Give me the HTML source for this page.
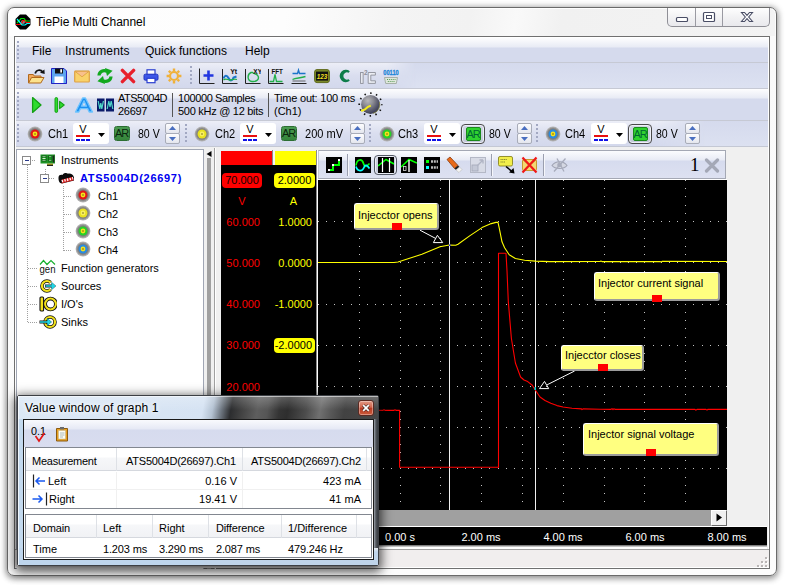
<!DOCTYPE html>
<html>
<head>
<meta charset="utf-8">
<title>TiePie Multi Channel</title>
<style>
html,body{margin:0;padding:0;}
body{width:786px;height:585px;overflow:hidden;background:#fff;position:relative;
 font-family:"Liberation Sans",sans-serif;font-size:11px;color:#000;}
.abs,.abs *{position:absolute;}
.abs{left:0;top:0;}
div,span,svg{box-sizing:border-box;}
.t{white-space:nowrap;line-height:14px;}
/* main window frame */
#win{left:7px;top:7px;width:770px;height:569px;border:1px solid #6a6a6a;border-radius:7px;
 background:linear-gradient(#fefefe,#fafafa 30px,#fcfcfc);
 box-shadow:0 1px 6px 1px rgba(0,0,0,.38), 0 3px 7px rgba(0,0,0,.14);}
#client{left:14px;top:36px;width:756px;height:533px;border:1px solid #707070;background:#f0f0f0;box-shadow:inset 0 0 0 1px #fff;}
.bar1{left:16px;width:752px;background:linear-gradient(#d5daed,#dce1f1);}
.bar2{left:16px;width:752px;background:linear-gradient(#fdfdfe 0,#e8ebf5 9px,#d5daed 10px,#d5daed 100%);}
.tb{background:linear-gradient(#eceef7 0,#dadeef 50%,#d3d8ec 100%);}
.sep{left:16px;width:752px;height:1px;background:#c6c9d4;}
.grip{width:3px;background:repeating-linear-gradient(180deg,#a2a8c2 0,#a2a8c2 2px,transparent 2px,transparent 4px);border-right:1px solid transparent;background-clip:padding-box;}
.m{font-size:12px;line-height:15px;}
.ax{font-size:11px;line-height:15px;text-align:center;}
.tx{color:#fff;width:40px;text-align:center;}
.sx{transform-origin:0 0;}
</style>
</head>
<body>
<div class="abs">
<div id="win"></div>
<div style="left:9px;top:9px;width:766px;height:27px;border-radius:5px 5px 0 0;background:linear-gradient(100deg,#fefefe 0,#fdfdfd 36%,#f4f4f4 50%,#f2f2f2 60%,#f9f9f9 66%,#f1f1f1 72%,#f3f3f3 100%);"></div>
<div id="client"></div>

<!-- title -->
<div class="t" style="left:36px;top:15px;font-size:12px;line-height:15px;letter-spacing:-0.05px">TiePie Multi Channel</div>

<!-- app icon -->
<svg style="left:15px;top:14px" width="16" height="16" viewBox="0 0 16 16"><polygon points="5,0.5 11,0.5 15.5,5 15.5,11 11,15.5 5,15.5 0.5,11 0.5,5" fill="#000"/><circle cx="8" cy="8" r="2" fill="#888"/><path d="M1,10.5H6L8,6.5H10L11,8.5H15" stroke="#f00" fill="none" stroke-width="1.2"/><path d="M2,9L6,4.5H9L11,7H15" stroke="#0d0" fill="none" stroke-width="1.2"/><path d="M2,5L7,11H10L12,9.5H15" stroke="#0ff" fill="none" stroke-width="1.2"/></svg>
<!-- caption buttons -->
<div style="left:667px;top:8px;width:103px;height:19px;border:1px solid #8f8f96;border-top:none;border-radius:0 0 5px 5px;background:linear-gradient(#fefefe,#f1f1f3 55%,#e9e9ed);"></div>
<div style="left:695px;top:8px;width:1px;height:18px;background:#9a9aa2"></div>
<div style="left:722px;top:8px;width:1px;height:18px;background:#9a9aa2"></div>
<svg style="left:667px;top:7px" width="103" height="20" viewBox="0 0 103 20">
<rect x="9.5" y="10.5" width="11" height="4" rx="1" fill="#fff" stroke="#4a4e66" stroke-width="1.2"/>
<rect x="36.5" y="5.5" width="11" height="9" rx="1" fill="#fff" stroke="#4a4e66" stroke-width="1.2"/>
<rect x="39.5" y="8.5" width="5" height="3" fill="#fff" stroke="#4a4e66" stroke-width="1"/>
<path d="M74.5,5.5h3l2.5,2.8l2.5,-2.8h3l-3.8,4.5l3.8,4.5h-3l-2.5,-2.8l-2.5,2.8h-3l3.8,-4.5z" fill="#fff" stroke="#4a4e66" stroke-width="1.1"/>
</svg>
<!-- bars -->
<div style="left:16px;top:38px;width:753px;height:109px;background:#fff"></div>
<div class="bar2" style="top:38px;height:24px;"></div>
<div class="sep" style="top:62px"></div>
<div class="bar1" style="top:63px;height:25px;"></div>
<div class="tb" style="left:16px;top:63px;width:400px;height:25px;-webkit-mask-image:linear-gradient(90deg,#000 0,#000 370px,transparent 400px);mask-image:linear-gradient(90deg,#000 0,#000 370px,transparent 400px);"></div>
<div class="sep" style="top:88px"></div>
<div class="bar2" style="top:89px;height:31px;"></div>
<div class="sep" style="top:120px"></div>
<div class="bar1" style="top:121px;height:25px;"></div>
<div class="tb" style="left:16px;top:121px;width:700px;height:25px;-webkit-mask-image:linear-gradient(90deg,#000 0,#000 640px,transparent 690px);mask-image:linear-gradient(90deg,#000 0,#000 640px,transparent 690px);"></div>
<div class="sep" style="top:146px;background:#c4c8d4"></div>

<!-- menu -->
<div class="grip" style="left:17px;top:41px;height:19px"></div>
<div class="t m" style="left:32px;top:44px;">File</div>
<div class="t m" style="left:65px;top:44px;letter-spacing:0.19px;">Instruments</div>
<div class="t m" style="left:145px;top:44px;">Quick functions</div>
<div class="t m" style="left:245px;top:44px;">Help</div>

<!-- toolbar 1 -->
<div class="grip" style="left:17px;top:66px;height:20px"></div>
<div class="grip" style="left:190px;top:66px;height:20px"></div>
<!-- open -->
<svg style="left:28px;top:68px" width="17" height="16" viewBox="0 0 17 16"><path d="M0.500,15V6.500h4.800l1,1.500h6.700v2.500" fill="#f2a85c" stroke="#b0681c"/><path d="M0.500,15L3.600,9.500h12.400L12.800,15z" fill="#fce28c" stroke="#b0681c"/><path d="M7.200,5.500C8,1.800 12.500,1 14.800,4" fill="none" stroke="#111" stroke-width="1.700"/><path d="M12,4.800l4.700,1.200l-0.300,-4.600z" fill="#111"/></svg>
<!-- save -->
<svg style="left:51px;top:68px" width="16" height="16" viewBox="0 0 16 16"><path d="M0.500,0.500h12.500l2.500,2.500v12.500H0.500z" fill="#5ea6f0" stroke="#2222c4" stroke-width="1"/><rect x="4" y="0.500" width="8" height="5" fill="#111"/><rect x="9.300" y="1.200" width="1.700" height="3.400" fill="#fff"/><rect x="3.500" y="8.500" width="9" height="7" fill="#fff"/><path d="M0.500,15.500H15.500" stroke="#2222c4"/></svg>
<!-- mail -->
<svg style="left:74px;top:68px" width="16" height="16" viewBox="0 0 16 16"><rect x="0.700" y="3" width="14.600" height="11" rx="0.800" fill="#f9d26a" stroke="#dea044" stroke-width="1.200"/><path d="M1,3.300L8,8.800L15,3.300z" fill="#f9c08c" stroke="#dea044" stroke-width="0.900"/></svg>
<!-- refresh -->
<svg style="left:97px;top:68px" width="16" height="16" viewBox="0 0 16 16"><path d="M2,7.500C2.200,3.400 6.500,1.600 10,3.400" fill="none" stroke="#12a81e" stroke-width="3.200"/><path d="M8,0L15.600,2.800L10,8z" fill="#12a81e"/><path d="M14,8.500C13.800,12.600 9.500,14.400 6,12.600" fill="none" stroke="#12a81e" stroke-width="3.200"/><path d="M8,16L0.400,13.200L6,8z" fill="#12a81e"/></svg>
<!-- delete X -->
<svg style="left:120px;top:68px" width="16" height="16" viewBox="0 0 16 16"><path d="M2.4,2.4L13.6,13.6M13.6,2.4L2.4,13.6" stroke="#e8202c" stroke-width="3.4" stroke-linecap="round"/></svg>
<!-- print -->
<svg style="left:143px;top:68px" width="16" height="16" viewBox="0 0 16 16"><rect x="4" y="1.8" width="8" height="5" fill="#fff" stroke="#2a3fd0" stroke-width="1.2"/><rect x="1" y="6.2" width="14" height="6" rx="1.3" fill="#3d57e8" stroke="#2436c0"/><rect x="4" y="10.3" width="8" height="4.4" fill="#fff" stroke="#2a3fd0" stroke-width="1.2"/></svg>
<!-- gear -->
<svg style="left:166px;top:68px" width="16" height="16" viewBox="0 0 16 16"><g fill="none" stroke="#f0b13a"><circle cx="8" cy="8" r="4" stroke-width="2.2"/><path d="M8,0.6V3M8,13V15.4M0.6,8H3M13,8H15.4M2.8,2.8L4.5,4.5M11.5,11.5L13.2,13.2M13.2,2.8L11.5,4.5M4.5,11.5L2.8,13.2" stroke-width="2.4"/></g></svg>
<!-- add axes -->
<svg style="left:199px;top:68px" width="16" height="16" viewBox="0 0 16 16"><path d="M0.5,0.5V15.5H15.5" fill="none" stroke="#222"/><path d="M9.5,2.5V12.5M4.5,7.5H14.5" stroke="#2236e0" stroke-width="2.6"/></svg>
<!-- Yt -->
<svg style="left:222px;top:68px" width="16" height="16" viewBox="0 0 16 16"><path d="M0.5,1V15.5H15.5" fill="none" stroke="#222"/><path d="M1.5,10.5C3,6.5 5,7 6.5,10S10,13.5 11.5,9.5L14.5,8.5" fill="none" stroke="#1b74c9" stroke-width="2"/><path d="M1.5,12C4,9.5 6,12.5 8.5,12S12,10.5 15,11.5" fill="none" stroke="#22b04a" stroke-width="1.3"/><text x="8.2" y="6" font-family="Liberation Sans,sans-serif" font-size="7" font-weight="bold" fill="#111">Yt</text></svg>
<!-- XY -->
<svg style="left:245px;top:68px" width="16" height="16" viewBox="0 0 16 16"><path d="M0.5,1V15.5H15.5" fill="none" stroke="#222"/><path d="M6,4.5C2,6.5 2,13 7,13.5S14.5,11 13,8S9.5,6.5 7.5,4.5z" fill="none" stroke="#22b04a" stroke-width="1.4"/><text x="8.3" y="5.8" font-family="Liberation Sans,sans-serif" font-size="6.5" font-weight="bold" fill="#111">XY</text></svg>
<!-- FFT -->
<svg style="left:268px;top:68px" width="16" height="16" viewBox="0 0 16 16"><path d="M0.5,1V15.5H15.5" fill="none" stroke="#222"/><path d="M1.5,13.5H5.5L7,6.5L8.5,13.5H14.5" fill="none" stroke="#22b04a" stroke-width="1.3"/><text x="3.4" y="5.6" font-family="Liberation Sans,sans-serif" font-size="6.3" font-weight="bold" fill="#111">FFT</text></svg>
<!-- lines -->
<svg style="left:291px;top:68px" width="16" height="16" viewBox="0 0 16 16"><path d="M0.5,15.5H15.5" stroke="#222"/><path d="M1.5,5.5H6.5L7.5,2L8.5,5.5H14.5" fill="none" stroke="#1b74c9" stroke-width="1.3"/><path d="M1.5,11.5C5,9.5 9,10.5 14.5,8.5" fill="none" stroke="#22b04a" stroke-width="1.4"/><path d="M1.5,13H14.5" stroke="#444" stroke-width="0.8"/></svg>
<!-- 123 -->
<svg style="left:314px;top:68px" width="16" height="16" viewBox="0 0 16 16"><rect x="0.6" y="1.6" width="14.8" height="13" rx="2.4" fill="#7c8a2a" stroke="#5f6a1c"/><rect x="2" y="3.6" width="12" height="9" fill="#111"/><text x="8" y="11.2" text-anchor="middle" font-family="Liberation Sans,sans-serif" font-size="8" font-style="italic" font-weight="bold" fill="#f5e020" textLength="10.5" lengthAdjust="spacingAndGlyphs">123</text></svg>
<!-- C -->
<svg style="left:337px;top:68px" width="16" height="16" viewBox="0 0 16 16"><path d="M12.8,3.2A6.2,6.2 0 1 0 12.8,12.8L11.6,11.2A3.6,3.6 0 1 1 11.6,4.8z" fill="#0e7d4a"/></svg>
<!-- I2C -->
<svg style="left:360px;top:68px" width="16" height="16" viewBox="0 0 16 16"><g fill="#eceef4" stroke="#8c8e98" stroke-width="0.900"><rect x="0.600" y="4.500" width="2.500" height="10.900"/><path d="M8.200,4.500h7.200v2.600h-4.600v5.700h4.600v2.600h-7.200z"/></g><text x="4" y="6.500" font-family="Liberation Sans,sans-serif" font-size="6.500" font-weight="bold" fill="#8c8e98">2</text></svg>
<!-- serial -->
<svg style="left:383px;top:68px" width="16" height="16" viewBox="0 0 16 16"><text x="8" y="6.800" text-anchor="middle" font-family="Liberation Sans,sans-serif" font-size="7.500" font-weight="bold" fill="#1f86d8" stroke="#1f86d8" stroke-width="0.300" textLength="15.500" lengthAdjust="spacingAndGlyphs">00110</text><path d="M1.500,9.500H14.500L13.300,15.500H2.700z" fill="#dfe8dc" stroke="#a0aaa0" stroke-width="0.900"/><path d="M4,11.500H12.500M4.800,13.500H11.600" stroke="#5a9a5a" stroke-width="1" stroke-dasharray="1 0.900"/></svg>

<!-- toolbar 2 -->
<div class="grip" style="left:17px;top:92px;height:26px"></div>
<svg style="left:28px;top:96px" width="16" height="18" viewBox="0 0 16 18"><path d="M4.6,1.6L13,9L4.6,16.4z" fill="#2fdc2f" stroke="#14a014" stroke-width="1.3" stroke-linejoin="round"/></svg>
<svg style="left:51px;top:96px" width="16" height="18" viewBox="0 0 16 18"><rect x="4" y="1.6" width="2.6" height="14.8" rx="1.2" fill="#2fdc2f" stroke="#14a014" stroke-width="1"/><path d="M8.6,5.4L13.2,9L8.6,12.6z" fill="#2fdc2f" stroke="#14a014" stroke-width="1.1" stroke-linejoin="round"/></svg>
<svg style="left:74px;top:96px" width="20" height="18" viewBox="0 0 20 18"><path d="M1.5,16L8.6,2H11.4L18.500,16H15.200L13.600,12.600H6.400L4.800,16zM7.500,10.200H12.500L10,4.800z" fill="#1e90f0" stroke="#6cc4ff" stroke-width="1.300" stroke-linejoin="round"/></svg>
<svg style="left:97px;top:98px" width="17" height="14" viewBox="0 0 17 14"><rect x="0" y="0.5" width="7.5" height="13" fill="#0a1a6a"/><rect x="9" y="0.5" width="8" height="13" fill="#0a1a6a"/><path d="M1.2,3L2.8,11L3.8,5L4.8,11L6.4,3" fill="none" stroke="#4fd8c8" stroke-width="1.2"/><path d="M10.2,11L11.8,3L13,9L14.2,3L15.8,11" fill="none" stroke="#4fd8c8" stroke-width="1.2"/></svg>
<div class="t" style="left:118px;top:92px;line-height:13px;letter-spacing:-0.5px">ATS5004D</div><div class="t" style="left:118px;top:105px;line-height:13px;letter-spacing:-0.3px">26697</div>
<div style="left:172px;top:93px;width:1px;height:24px;background:#555"></div>
<div class="t" style="left:178px;top:92px;line-height:13px;letter-spacing:-0.38px">100000 Samples</div><div class="t" style="left:178px;top:105px;line-height:13px;letter-spacing:-0.28px">500 kHz @ 12 bits</div>
<div style="left:268px;top:93px;width:1px;height:24px;background:#555"></div>
<div class="t" style="left:274px;top:92px;line-height:13px;letter-spacing:-0.22px">Time out: 100 ms</div><div class="t" style="left:274px;top:105px;line-height:13px;">(Ch1)</div>
<!-- knob -->
<svg style="left:357px;top:91px" width="28" height="28" viewBox="0 0 28 28"><defs><radialGradient id="kg" cx="0.36" cy="0.30" r="0.8"><stop offset="0" stop-color="#b8b8bc"/><stop offset="0.35" stop-color="#8c8c94"/><stop offset="0.7" stop-color="#55566a"/><stop offset="1" stop-color="#2c2e48"/></radialGradient></defs><circle cx="13.5" cy="13.500" r="11.300" fill="none" stroke="#111" stroke-width="1.700" stroke-dasharray="1.500 4.420" stroke-dashoffset="0.700"/><circle cx="13.500" cy="13.500" r="9.400" fill="url(#kg)"/><path d="M16,22.500A9.400,9.400 0 0 0 22.500,11" fill="none" stroke="#8a8a3a" stroke-width="1" opacity="0.700"/><path d="M4.200,20L8,18.300L11,15.800L13.800,14.600" fill="none" stroke="#f5ec1a" stroke-width="2"/></svg>

<!-- toolbar 3: channels -->
<div class="grip" style="left:17px;top:124px;height:20px"></div>
<svg style="left:27px;top:126px" width="16" height="16" viewBox="0 0 16 16"><circle cx="8" cy="8" r="7.4" fill="#b2b2b2"/><circle cx="8" cy="8" r="6.5" fill="#929292"/><circle cx="8" cy="8" r="5.4" fill="#7c7c7c"/><circle cx="8" cy="8" r="4.5" fill="#e01818"/><circle cx="8" cy="8" r="2.4" fill="#f5e21a"/><circle cx="8" cy="8" r="0.7" fill="#5a4a10"/></svg>
<div class="t m sx" style="left:48px;top:127px;transform:scaleX(0.92);">Ch1</div>
<div style="left:73px;top:123px;width:36px;height:21px;background:#fff;border-radius:3px;"></div>
<div class="t" style="left:76px;top:122px;width:14px;text-align:center;font-size:11px;line-height:15px;">V</div>
<div style="left:76px;top:135px;width:14px;height:2px;background:#e81010"></div>
<div style="left:76px;top:139px;width:14px;height:2px;background:linear-gradient(90deg,#1010e8 0,#1010e8 4px,transparent 4px,transparent 5px,#1010e8 5px,#1010e8 9px,transparent 9px,transparent 10px,#1010e8 10px)"></div>
<svg style="left:98px;top:133px" width="7" height="4" viewBox="0 0 7 4"><path d="M0,0H7L3.5,4z" fill="#000"/></svg>
<div class="t" style="left:114px;top:126px;width:16px;height:15px;background:#3d8f43;border:1px solid #2c6e32;border-radius:2.5px;font-size:11px;line-height:13px;text-align:center;letter-spacing:-1.2px;text-indent:-1px;color:#0a260e;background:linear-gradient(#4a9a50,#35853b);">AR</div>
<div class="t m sx" style="left:138px;top:127px;transform:scaleX(0.88);">80 V</div>
<div style="left:165px;top:123px;width:15px;height:11px;border:1px solid #a8acb8;border-radius:2px;background:linear-gradient(#fdfdfe,#e4e6ee);"></div>
<div style="left:165px;top:133px;width:15px;height:11px;border:1px solid #a8acb8;border-radius:2px;background:linear-gradient(#fdfdfe,#e4e6ee);"></div>
<svg style="left:169px;top:126px" width="7" height="4" viewBox="0 0 7 4"><path d="M0,4H7L3.5,0z" fill="#4a6fc0"/></svg>
<svg style="left:169px;top:137px" width="7" height="4" viewBox="0 0 7 4"><path d="M0,0H7L3.5,4z" fill="#4a6fc0"/></svg>
<div class="grip" style="left:185px;top:124px;height:20px"></div>
<svg style="left:194px;top:126px" width="16" height="16" viewBox="0 0 16 16"><circle cx="8" cy="8" r="7.4" fill="#b2b2b2"/><circle cx="8" cy="8" r="6.5" fill="#929292"/><circle cx="8" cy="8" r="5.4" fill="#7c7c7c"/><circle cx="8" cy="8" r="4.5" fill="#e8e020"/><circle cx="8" cy="8" r="2.4" fill="#f8f060"/><circle cx="8" cy="8" r="0.7" fill="#5a4a10"/></svg>
<div class="t m sx" style="left:215px;top:127px;transform:scaleX(0.92);">Ch2</div>
<div style="left:240px;top:123px;width:36px;height:21px;background:#fff;border-radius:3px;"></div>
<div class="t" style="left:243px;top:122px;width:14px;text-align:center;font-size:11px;line-height:15px;">V</div>
<div style="left:243px;top:135px;width:14px;height:2px;background:#e81010"></div>
<div style="left:243px;top:139px;width:14px;height:2px;background:linear-gradient(90deg,#1010e8 0,#1010e8 4px,transparent 4px,transparent 5px,#1010e8 5px,#1010e8 9px,transparent 9px,transparent 10px,#1010e8 10px)"></div>
<svg style="left:265px;top:133px" width="7" height="4" viewBox="0 0 7 4"><path d="M0,0H7L3.5,4z" fill="#000"/></svg>
<div class="t" style="left:281px;top:126px;width:16px;height:15px;background:#3d8f43;border:1px solid #2c6e32;border-radius:2.5px;font-size:11px;line-height:13px;text-align:center;letter-spacing:-1.2px;text-indent:-1px;color:#0a260e;background:linear-gradient(#4a9a50,#35853b);">AR</div>
<div class="t m sx" style="left:305px;top:127px;transform:scaleX(0.92);">200 mV</div>
<div style="left:350px;top:123px;width:15px;height:11px;border:1px solid #a8acb8;border-radius:2px;background:linear-gradient(#fdfdfe,#e4e6ee);"></div>
<div style="left:350px;top:133px;width:15px;height:11px;border:1px solid #a8acb8;border-radius:2px;background:linear-gradient(#fdfdfe,#e4e6ee);"></div>
<svg style="left:354px;top:126px" width="7" height="4" viewBox="0 0 7 4"><path d="M0,4H7L3.5,0z" fill="#4a6fc0"/></svg>
<svg style="left:354px;top:137px" width="7" height="4" viewBox="0 0 7 4"><path d="M0,0H7L3.5,4z" fill="#4a6fc0"/></svg>
<div class="grip" style="left:369px;top:124px;height:20px"></div>
<svg style="left:379px;top:126px" width="16" height="16" viewBox="0 0 16 16"><circle cx="8" cy="8" r="7.4" fill="#b2b2b2"/><circle cx="8" cy="8" r="6.5" fill="#929292"/><circle cx="8" cy="8" r="5.4" fill="#7c7c7c"/><circle cx="8" cy="8" r="4.5" fill="#28d028"/><circle cx="8" cy="8" r="2.4" fill="#f5e21a"/><circle cx="8" cy="8" r="0.7" fill="#5a4a10"/></svg>
<div class="t m sx" style="left:398px;top:127px;transform:scaleX(0.92);">Ch3</div>
<div style="left:424px;top:123px;width:36px;height:21px;background:#fff;border-radius:3px;"></div>
<div class="t" style="left:427px;top:122px;width:14px;text-align:center;font-size:11px;line-height:15px;">V</div>
<div style="left:427px;top:135px;width:14px;height:2px;background:#e81010"></div>
<div style="left:427px;top:139px;width:14px;height:2px;background:linear-gradient(90deg,#1010e8 0,#1010e8 4px,transparent 4px,transparent 5px,#1010e8 5px,#1010e8 9px,transparent 9px,transparent 10px,#1010e8 10px)"></div>
<svg style="left:449px;top:133px" width="7" height="4" viewBox="0 0 7 4"><path d="M0,0H7L3.5,4z" fill="#000"/></svg>
<div style="left:461px;top:124px;width:24px;height:20px;border:1px solid #4a4a4a;border-radius:4px;background:linear-gradient(#d2d6e4,#c2c7d8);box-shadow:inset 0 0 0 1px #eef0f7;"></div>
<div class="t" style="left:466px;top:127px;width:15px;height:14px;background:#2fd22f;border:1px solid #1a8a1a;border-radius:2px;font-size:11px;line-height:12px;text-align:center;letter-spacing:-1.2px;text-indent:-1px;color:#063;">AR</div>
<div class="t m sx" style="left:489px;top:127px;transform:scaleX(0.88);">80 V</div>
<div style="left:517px;top:123px;width:15px;height:11px;border:1px solid #a8acb8;border-radius:2px;background:linear-gradient(#fdfdfe,#e4e6ee);"></div>
<div style="left:517px;top:133px;width:15px;height:11px;border:1px solid #a8acb8;border-radius:2px;background:linear-gradient(#fdfdfe,#e4e6ee);"></div>
<svg style="left:521px;top:126px" width="7" height="4" viewBox="0 0 7 4"><path d="M0,4H7L3.5,0z" fill="#4a6fc0"/></svg>
<svg style="left:521px;top:137px" width="7" height="4" viewBox="0 0 7 4"><path d="M0,0H7L3.5,4z" fill="#4a6fc0"/></svg>
<div class="grip" style="left:536px;top:124px;height:20px"></div>
<svg style="left:545px;top:126px" width="16" height="16" viewBox="0 0 16 16"><circle cx="8" cy="8" r="7.4" fill="#b2b2b2"/><circle cx="8" cy="8" r="6.5" fill="#929292"/><circle cx="8" cy="8" r="5.4" fill="#7c7c7c"/><circle cx="8" cy="8" r="4.5" fill="#2a8ce0"/><circle cx="8" cy="8" r="2.4" fill="#f5e21a"/><circle cx="8" cy="8" r="0.7" fill="#5a4a10"/></svg>
<div class="t m sx" style="left:565px;top:127px;transform:scaleX(0.92);">Ch4</div>
<div style="left:591px;top:123px;width:36px;height:21px;background:#fff;border-radius:3px;"></div>
<div class="t" style="left:594px;top:122px;width:14px;text-align:center;font-size:11px;line-height:15px;">V</div>
<div style="left:594px;top:135px;width:14px;height:2px;background:#e81010"></div>
<div style="left:594px;top:139px;width:14px;height:2px;background:linear-gradient(90deg,#1010e8 0,#1010e8 4px,transparent 4px,transparent 5px,#1010e8 5px,#1010e8 9px,transparent 9px,transparent 10px,#1010e8 10px)"></div>
<svg style="left:616px;top:133px" width="7" height="4" viewBox="0 0 7 4"><path d="M0,0H7L3.5,4z" fill="#000"/></svg>
<div style="left:628px;top:124px;width:24px;height:20px;border:1px solid #4a4a4a;border-radius:4px;background:linear-gradient(#d2d6e4,#c2c7d8);box-shadow:inset 0 0 0 1px #eef0f7;"></div>
<div class="t" style="left:633px;top:127px;width:15px;height:14px;background:#2fd22f;border:1px solid #1a8a1a;border-radius:2px;font-size:11px;line-height:12px;text-align:center;letter-spacing:-1.2px;text-indent:-1px;color:#063;">AR</div>
<div class="t m sx" style="left:656px;top:127px;transform:scaleX(0.88);">80 V</div>
<div style="left:685px;top:123px;width:15px;height:11px;border:1px solid #a8acb8;border-radius:2px;background:linear-gradient(#fdfdfe,#e4e6ee);"></div>
<div style="left:685px;top:133px;width:15px;height:11px;border:1px solid #a8acb8;border-radius:2px;background:linear-gradient(#fdfdfe,#e4e6ee);"></div>
<svg style="left:689px;top:126px" width="7" height="4" viewBox="0 0 7 4"><path d="M0,4H7L3.5,0z" fill="#4a6fc0"/></svg>
<svg style="left:689px;top:137px" width="7" height="4" viewBox="0 0 7 4"><path d="M0,0H7L3.5,4z" fill="#4a6fc0"/></svg>

<!-- tree panel -->
<div style="left:16px;top:149px;width:188px;height:420px;background:#fff;border:1px solid #a0a6b4;border-bottom:none;"></div>
<!-- tree dotted lines -->
<svg style="left:16px;top:149px" width="188" height="200" viewBox="0 0 188 200" shape-rendering="crispEdges">
<g stroke="#a0a0a0" stroke-width="1" stroke-dasharray="1 1" fill="none">
<path d="M11.500,16V173.500M16,11.500H20M11.500,119.500H21M11.500,137.500H21M11.500,155.500H21M11.500,173.500H21"/>
<path d="M29.500,20V25M33,29.500H38"/>
<path d="M47.500,37V101.500M47.500,47.500H56M47.500,65.500H56M47.500,83.500H56M47.500,101.500H56"/>
</g>
<g fill="#fff" stroke="#8a8a8a" stroke-width="1"><rect x="6.5" y="7.5" width="8" height="8"/><rect x="24.5" y="25.500" width="8" height="8"/></g>
<path d="M8.5,11.5H13M26.5,29.500H31" stroke="#2a3a8a" stroke-width="1"/>
</svg>
<!-- Instruments icon -->
<svg style="left:40px;top:153px" width="17" height="15" viewBox="0 0 17 15"><rect x="0.500" y="1.500" width="14.500" height="9" fill="#1f9426"/><path d="M2,3.500h4M2,5.500h4M2,7.500h4M8.500,3.500h3M8.500,7.500h3" stroke="#d4efcf" stroke-width="1"/><rect x="2" y="3" width="4" height="5" fill="none" stroke="#0c5a12" stroke-width="0.800"/><rect x="8.500" y="3" width="3.500" height="5" fill="none" stroke="#0c5a12" stroke-width="0.800"/><rect x="12.800" y="2.500" width="1.500" height="7" fill="#222"/><rect x="7" y="10.500" width="6" height="1.800" fill="#8a8a1a"/><rect x="7" y="12" width="6" height="1" fill="#222"/></svg>
<div class="t" style="left:61px;top:153px;">Instruments</div>
<!-- instrument icon -->
<svg style="left:58px;top:171px" width="17" height="14" viewBox="0 0 17 14"><path d="M0.500,6.500C0.500,4 3,3.500 4.500,4C5.500,2 8.500,1.500 10,2.800C12,2 15.500,3.500 16,6.500V9.500L4,12.500C1.500,12.500 0.300,9.500 0.500,6.500z" fill="#0c0c0c"/><path d="M3.800,10.300L15.200,7.300" stroke="#d22" stroke-width="3"/><path d="M3.800,10.300L15.200,7.300" stroke="#fff" stroke-width="2.600" stroke-dasharray="1.300 1.400"/><path d="M3.500,12L15.500,9" stroke="#d22" stroke-width="0.800"/></svg>
<div class="t" style="left:80px;top:171px;font-weight:bold;color:#0000f0;letter-spacing:0.7px;">ATS5004D(26697)</div>
<svg style="left:75.400px;top:187.3px" width="16" height="16" viewBox="0 0 16 16"><circle cx="8" cy="8" r="7.4" fill="#b2b2b2"/><circle cx="8" cy="8" r="6.5" fill="#929292"/><circle cx="8" cy="8" r="5.4" fill="#7c7c7c"/><circle cx="8" cy="8" r="4.5" fill="#e01818"/><circle cx="8" cy="8" r="2.4" fill="#f5e21a"/><circle cx="8" cy="8" r="0.7" fill="#5a4a10"/></svg>
<div class="t" style="left:98px;top:189px;">Ch1</div>
<svg style="left:75.400px;top:205.3px" width="16" height="16" viewBox="0 0 16 16"><circle cx="8" cy="8" r="7.4" fill="#b2b2b2"/><circle cx="8" cy="8" r="6.5" fill="#929292"/><circle cx="8" cy="8" r="5.4" fill="#7c7c7c"/><circle cx="8" cy="8" r="4.5" fill="#e8e020"/><circle cx="8" cy="8" r="2.4" fill="#f8f060"/><circle cx="8" cy="8" r="0.7" fill="#5a4a10"/></svg>
<div class="t" style="left:98px;top:207px;">Ch2</div>
<svg style="left:75.400px;top:223.3px" width="16" height="16" viewBox="0 0 16 16"><circle cx="8" cy="8" r="7.4" fill="#b2b2b2"/><circle cx="8" cy="8" r="6.5" fill="#929292"/><circle cx="8" cy="8" r="5.4" fill="#7c7c7c"/><circle cx="8" cy="8" r="4.5" fill="#28d028"/><circle cx="8" cy="8" r="2.4" fill="#f5e21a"/><circle cx="8" cy="8" r="0.7" fill="#5a4a10"/></svg>
<div class="t" style="left:98px;top:225px;">Ch3</div>
<svg style="left:75.400px;top:241.3px" width="16" height="16" viewBox="0 0 16 16"><circle cx="8" cy="8" r="7.4" fill="#b2b2b2"/><circle cx="8" cy="8" r="6.5" fill="#929292"/><circle cx="8" cy="8" r="5.4" fill="#7c7c7c"/><circle cx="8" cy="8" r="4.5" fill="#2a8ce0"/><circle cx="8" cy="8" r="2.4" fill="#f5e21a"/><circle cx="8" cy="8" r="0.7" fill="#5a4a10"/></svg>
<div class="t" style="left:98px;top:243px;">Ch4</div>

<!-- gen icon -->
<svg style="left:39px;top:259px" width="18" height="17" viewBox="0 0 18 17"><path d="M1,5.500L4.500,1.500L8,5.500L12,1.500L16,5.500" fill="none" stroke="#18b030" stroke-width="1.200"/><text x="0.500" y="13.500" font-family="Liberation Sans,sans-serif" font-size="11" fill="#111" textLength="16" lengthAdjust="spacingAndGlyphs">gen</text></svg>
<div class="t" style="left:61px;top:261px;">Function generators</div>
<!-- sources icon -->
<svg style="left:39px;top:278px" width="18" height="16" viewBox="0 0 18 16"><path d="M11.500,4.500A5,5 0 1 0 11.500,11.500" fill="none" stroke="#111" stroke-width="3.600"/><path d="M11.500,4.500A5,5 0 1 0 11.500,11.500" fill="none" stroke="#f2e21a" stroke-width="2.200"/><path d="M6,8H13.500" stroke="#111" stroke-width="3"/><path d="M12.500,4L17,8L12.500,12z" fill="#111"/><path d="M6.500,8H13.500M13.300,5.800L15.800,8L13.300,10.200z" stroke="#22d8e8" stroke-width="1.300" fill="#22d8e8"/></svg>
<div class="t" style="left:61px;top:279px;">Sources</div>
<!-- IO icon -->
<svg style="left:39px;top:296px" width="18" height="16" viewBox="0 0 18 16"><rect x="1" y="1" width="3.600" height="14" rx="1" fill="#f2e21a" stroke="#111" stroke-width="1.100"/><circle cx="11.500" cy="8" r="5.400" fill="none" stroke="#111" stroke-width="3.800"/><circle cx="11.500" cy="8" r="5.400" fill="none" stroke="#f2e21a" stroke-width="2"/></svg>
<div class="t" style="left:61px;top:297px;">I/O's</div>
<!-- sinks icon -->
<svg style="left:39px;top:314px" width="18" height="16" viewBox="0 0 18 16"><circle cx="11" cy="8" r="5" fill="none" stroke="#111" stroke-width="3.600"/><circle cx="11" cy="8" r="5" fill="none" stroke="#f2e21a" stroke-width="2.200"/><path d="M0.500,8H9" stroke="#111" stroke-width="3"/><path d="M8,4L12.800,8L8,12z" fill="#111"/><path d="M1,8H9M9,5.800L11.500,8L9,10.200z" stroke="#22d8e8" stroke-width="1.300" fill="#22d8e8"/></svg>
<div class="t" style="left:61px;top:315px;">Sinks</div>

<!-- splitter -->
<svg style="left:206px;top:151px" width="6" height="6" viewBox="0 0 6 6"><path d="M5.500,0V6L0.500,3z" fill="#000"/></svg>
<div style="left:207px;top:158px;width:4px;height:411px;background:#a0a0a0"></div>
<div style="left:214px;top:148px;width:1px;height:421px;background:#a0a0a0"></div>
<div style="left:215px;top:148px;width:1px;height:421px;background:#fff"></div>

<!-- scope: axis area -->
<div style="left:221px;top:151px;width:95px;height:394px;background:#000"></div>
<div style="left:221px;top:151px;width:51px;height:14px;background:#f00"></div>
<div style="left:272px;top:150px;width:3px;height:15px;background:linear-gradient(90deg,#8a8a8a 0,#8a8a8a 1px,#f4f4f4 1px)"></div>
<div style="left:275px;top:151px;width:41px;height:14px;background:#ff0"></div>
<div style="left:316px;top:150px;width:1px;height:395px;background:#8a8a8a"></div>
<div style="left:317px;top:150px;width:1px;height:395px;background:#fff"></div>
<div class="t ax" style="left:222px;top:173px;width:40px;height:15px;background:#f00;border-radius:4px;color:#100;">70.000</div>
<div class="t ax" style="left:274px;top:173px;width:41px;height:15px;background:#ff0;border-radius:4px;color:#000;">2.0000</div>
<div class="t ax" style="left:222px;top:194px;width:40px;color:#f00;">V</div>
<div class="t ax" style="left:273px;top:194px;width:41px;color:#ff0;">A</div>
<div class="t ax" style="left:222px;top:215px;width:40px;color:#f00;text-align:right;padding-right:2px">60.000</div>
<div class="t ax" style="left:222px;top:256px;width:40px;color:#f00;text-align:right;padding-right:2px">50.000</div>
<div class="t ax" style="left:222px;top:297px;width:40px;color:#f00;text-align:right;padding-right:2px">40.000</div>
<div class="t ax" style="left:222px;top:338px;width:40px;color:#f00;text-align:right;padding-right:2px">30.000</div>
<div class="t ax" style="left:222px;top:380px;width:40px;color:#f00;text-align:right;padding-right:2px">20.000</div>
<div class="t ax" style="left:222px;top:421px;width:40px;color:#f00;text-align:right;padding-right:2px">10.000</div>
<div class="t ax" style="left:222px;top:462px;width:40px;color:#f00;text-align:right;padding-right:2px">0.000</div>
<div class="t ax" style="left:222px;top:503px;width:40px;color:#f00;text-align:right;padding-right:2px">-10.000</div>
<div class="t ax" style="left:274px;top:215px;width:41px;color:#ff0;text-align:right;padding-right:3px">1.0000</div>
<div class="t ax" style="left:274px;top:256px;width:41px;color:#ff0;text-align:right;padding-right:3px">0.0000</div>
<div class="t ax" style="left:274px;top:297px;width:41px;color:#ff0;text-align:right;padding-right:3px">-1.0000</div>
<div class="t ax" style="left:274px;top:338px;width:41px;height:15px;background:#ff0;border-radius:4px;color:#000;text-align:right;padding-right:3px">-2.0000</div>

<!-- scope toolbar -->
<div style="left:318px;top:150px;width:408px;height:29px;border:1px solid #a4a8b4;border-left:1px solid #c4c8d2;background:linear-gradient(#fbfcfe 0,#e8ebf5 9px,#d6dbee 10px,#dde1f1 100%);"></div>
<div style="left:318px;top:179px;width:409px;height:1px;background:#fff"></div>
<!-- graph -->
<svg style="left:318px;top:180px" width="409" height="330" viewBox="0 0 409 330"><rect width="409" height="330" fill="#000"/>
<g shape-rendering="crispEdges"><path d="M0,41h1v1h-1zM0,82h1v1h-1zM0,124h1v1h-1zM0,165h1v1h-1zM0,206h1v1h-1zM0,247h1v1h-1zM0,288h1v1h-1zM8,41h1v1h-1zM8,82h1v1h-1zM8,124h1v1h-1zM8,165h1v1h-1zM8,206h1v1h-1zM8,247h1v1h-1zM8,288h1v1h-1zM16,41h1v1h-1zM16,82h1v1h-1zM16,124h1v1h-1zM16,165h1v1h-1zM16,206h1v1h-1zM16,247h1v1h-1zM16,288h1v1h-1zM24,41h1v1h-1zM24,82h1v1h-1zM24,124h1v1h-1zM24,165h1v1h-1zM24,206h1v1h-1zM24,247h1v1h-1zM24,288h1v1h-1zM33,41h1v1h-1zM33,82h1v1h-1zM33,124h1v1h-1zM33,165h1v1h-1zM33,206h1v1h-1zM33,247h1v1h-1zM33,288h1v1h-1zM41,0h1v1h-1zM41,8h1v1h-1zM41,16h1v1h-1zM41,25h1v1h-1zM41,33h1v1h-1zM41,41h1v1h-1zM41,49h1v1h-1zM41,58h1v1h-1zM41,66h1v1h-1zM41,74h1v1h-1zM41,82h1v1h-1zM41,91h1v1h-1zM41,99h1v1h-1zM41,107h1v1h-1zM41,115h1v1h-1zM41,124h1v1h-1zM41,132h1v1h-1zM41,140h1v1h-1zM41,148h1v1h-1zM41,157h1v1h-1zM41,165h1v1h-1zM41,173h1v1h-1zM41,181h1v1h-1zM41,190h1v1h-1zM41,198h1v1h-1zM41,206h1v1h-1zM41,214h1v1h-1zM41,222h1v1h-1zM41,231h1v1h-1zM41,239h1v1h-1zM41,247h1v1h-1zM41,255h1v1h-1zM41,264h1v1h-1zM41,272h1v1h-1zM41,280h1v1h-1zM41,288h1v1h-1zM41,297h1v1h-1zM41,305h1v1h-1zM41,313h1v1h-1zM41,321h1v1h-1zM49,41h1v1h-1zM49,82h1v1h-1zM49,124h1v1h-1zM49,165h1v1h-1zM49,206h1v1h-1zM49,247h1v1h-1zM49,288h1v1h-1zM57,41h1v1h-1zM57,82h1v1h-1zM57,124h1v1h-1zM57,165h1v1h-1zM57,206h1v1h-1zM57,247h1v1h-1zM57,288h1v1h-1zM65,41h1v1h-1zM65,82h1v1h-1zM65,124h1v1h-1zM65,165h1v1h-1zM65,206h1v1h-1zM65,247h1v1h-1zM65,288h1v1h-1zM73,41h1v1h-1zM73,82h1v1h-1zM73,124h1v1h-1zM73,165h1v1h-1zM73,206h1v1h-1zM73,247h1v1h-1zM73,288h1v1h-1zM82,0h1v1h-1zM82,8h1v1h-1zM82,16h1v1h-1zM82,25h1v1h-1zM82,33h1v1h-1zM82,41h1v1h-1zM82,49h1v1h-1zM82,58h1v1h-1zM82,66h1v1h-1zM82,74h1v1h-1zM82,82h1v1h-1zM82,91h1v1h-1zM82,99h1v1h-1zM82,107h1v1h-1zM82,115h1v1h-1zM82,124h1v1h-1zM82,132h1v1h-1zM82,140h1v1h-1zM82,148h1v1h-1zM82,157h1v1h-1zM82,165h1v1h-1zM82,173h1v1h-1zM82,181h1v1h-1zM82,190h1v1h-1zM82,198h1v1h-1zM82,206h1v1h-1zM82,214h1v1h-1zM82,222h1v1h-1zM82,231h1v1h-1zM82,239h1v1h-1zM82,247h1v1h-1zM82,255h1v1h-1zM82,264h1v1h-1zM82,272h1v1h-1zM82,280h1v1h-1zM82,288h1v1h-1zM82,297h1v1h-1zM82,305h1v1h-1zM82,313h1v1h-1zM82,321h1v1h-1zM90,41h1v1h-1zM90,82h1v1h-1zM90,124h1v1h-1zM90,165h1v1h-1zM90,206h1v1h-1zM90,247h1v1h-1zM90,288h1v1h-1zM98,41h1v1h-1zM98,82h1v1h-1zM98,124h1v1h-1zM98,165h1v1h-1zM98,206h1v1h-1zM98,247h1v1h-1zM98,288h1v1h-1zM106,41h1v1h-1zM106,82h1v1h-1zM106,124h1v1h-1zM106,165h1v1h-1zM106,206h1v1h-1zM106,247h1v1h-1zM106,288h1v1h-1zM114,41h1v1h-1zM114,82h1v1h-1zM114,124h1v1h-1zM114,165h1v1h-1zM114,206h1v1h-1zM114,247h1v1h-1zM114,288h1v1h-1zM122,0h1v1h-1zM122,8h1v1h-1zM122,16h1v1h-1zM122,25h1v1h-1zM122,33h1v1h-1zM122,41h1v1h-1zM122,49h1v1h-1zM122,58h1v1h-1zM122,66h1v1h-1zM122,74h1v1h-1zM122,82h1v1h-1zM122,91h1v1h-1zM122,99h1v1h-1zM122,107h1v1h-1zM122,115h1v1h-1zM122,124h1v1h-1zM122,132h1v1h-1zM122,140h1v1h-1zM122,148h1v1h-1zM122,157h1v1h-1zM122,165h1v1h-1zM122,173h1v1h-1zM122,181h1v1h-1zM122,190h1v1h-1zM122,198h1v1h-1zM122,206h1v1h-1zM122,214h1v1h-1zM122,222h1v1h-1zM122,231h1v1h-1zM122,239h1v1h-1zM122,247h1v1h-1zM122,255h1v1h-1zM122,264h1v1h-1zM122,272h1v1h-1zM122,280h1v1h-1zM122,288h1v1h-1zM122,297h1v1h-1zM122,305h1v1h-1zM122,313h1v1h-1zM122,321h1v1h-1zM131,41h1v1h-1zM131,82h1v1h-1zM131,124h1v1h-1zM131,165h1v1h-1zM131,206h1v1h-1zM131,247h1v1h-1zM131,288h1v1h-1zM139,41h1v1h-1zM139,82h1v1h-1zM139,124h1v1h-1zM139,165h1v1h-1zM139,206h1v1h-1zM139,247h1v1h-1zM139,288h1v1h-1zM147,41h1v1h-1zM147,82h1v1h-1zM147,124h1v1h-1zM147,165h1v1h-1zM147,206h1v1h-1zM147,247h1v1h-1zM147,288h1v1h-1zM155,41h1v1h-1zM155,82h1v1h-1zM155,124h1v1h-1zM155,165h1v1h-1zM155,206h1v1h-1zM155,247h1v1h-1zM155,288h1v1h-1zM163,0h1v1h-1zM163,8h1v1h-1zM163,16h1v1h-1zM163,25h1v1h-1zM163,33h1v1h-1zM163,41h1v1h-1zM163,49h1v1h-1zM163,58h1v1h-1zM163,66h1v1h-1zM163,74h1v1h-1zM163,82h1v1h-1zM163,91h1v1h-1zM163,99h1v1h-1zM163,107h1v1h-1zM163,115h1v1h-1zM163,124h1v1h-1zM163,132h1v1h-1zM163,140h1v1h-1zM163,148h1v1h-1zM163,157h1v1h-1zM163,165h1v1h-1zM163,173h1v1h-1zM163,181h1v1h-1zM163,190h1v1h-1zM163,198h1v1h-1zM163,206h1v1h-1zM163,214h1v1h-1zM163,222h1v1h-1zM163,231h1v1h-1zM163,239h1v1h-1zM163,247h1v1h-1zM163,255h1v1h-1zM163,264h1v1h-1zM163,272h1v1h-1zM163,280h1v1h-1zM163,288h1v1h-1zM163,297h1v1h-1zM163,305h1v1h-1zM163,313h1v1h-1zM163,321h1v1h-1zM171,41h1v1h-1zM171,82h1v1h-1zM171,124h1v1h-1zM171,165h1v1h-1zM171,206h1v1h-1zM171,247h1v1h-1zM171,288h1v1h-1zM180,41h1v1h-1zM180,82h1v1h-1zM180,124h1v1h-1zM180,165h1v1h-1zM180,206h1v1h-1zM180,247h1v1h-1zM180,288h1v1h-1zM188,41h1v1h-1zM188,82h1v1h-1zM188,124h1v1h-1zM188,165h1v1h-1zM188,206h1v1h-1zM188,247h1v1h-1zM188,288h1v1h-1zM196,41h1v1h-1zM196,82h1v1h-1zM196,124h1v1h-1zM196,165h1v1h-1zM196,206h1v1h-1zM196,247h1v1h-1zM196,288h1v1h-1zM204,0h1v1h-1zM204,8h1v1h-1zM204,16h1v1h-1zM204,25h1v1h-1zM204,33h1v1h-1zM204,41h1v1h-1zM204,49h1v1h-1zM204,58h1v1h-1zM204,66h1v1h-1zM204,74h1v1h-1zM204,82h1v1h-1zM204,91h1v1h-1zM204,99h1v1h-1zM204,107h1v1h-1zM204,115h1v1h-1zM204,124h1v1h-1zM204,132h1v1h-1zM204,140h1v1h-1zM204,148h1v1h-1zM204,157h1v1h-1zM204,165h1v1h-1zM204,173h1v1h-1zM204,181h1v1h-1zM204,190h1v1h-1zM204,198h1v1h-1zM204,206h1v1h-1zM204,214h1v1h-1zM204,222h1v1h-1zM204,231h1v1h-1zM204,239h1v1h-1zM204,247h1v1h-1zM204,255h1v1h-1zM204,264h1v1h-1zM204,272h1v1h-1zM204,280h1v1h-1zM204,288h1v1h-1zM204,297h1v1h-1zM204,305h1v1h-1zM204,313h1v1h-1zM204,321h1v1h-1zM212,41h1v1h-1zM212,82h1v1h-1zM212,124h1v1h-1zM212,165h1v1h-1zM212,206h1v1h-1zM212,247h1v1h-1zM212,288h1v1h-1zM220,41h1v1h-1zM220,82h1v1h-1zM220,124h1v1h-1zM220,165h1v1h-1zM220,206h1v1h-1zM220,247h1v1h-1zM220,288h1v1h-1zM228,41h1v1h-1zM228,82h1v1h-1zM228,124h1v1h-1zM228,165h1v1h-1zM228,206h1v1h-1zM228,247h1v1h-1zM228,288h1v1h-1zM237,41h1v1h-1zM237,82h1v1h-1zM237,124h1v1h-1zM237,165h1v1h-1zM237,206h1v1h-1zM237,247h1v1h-1zM237,288h1v1h-1zM245,0h1v1h-1zM245,8h1v1h-1zM245,16h1v1h-1zM245,25h1v1h-1zM245,33h1v1h-1zM245,41h1v1h-1zM245,49h1v1h-1zM245,58h1v1h-1zM245,66h1v1h-1zM245,74h1v1h-1zM245,82h1v1h-1zM245,91h1v1h-1zM245,99h1v1h-1zM245,107h1v1h-1zM245,115h1v1h-1zM245,124h1v1h-1zM245,132h1v1h-1zM245,140h1v1h-1zM245,148h1v1h-1zM245,157h1v1h-1zM245,165h1v1h-1zM245,173h1v1h-1zM245,181h1v1h-1zM245,190h1v1h-1zM245,198h1v1h-1zM245,206h1v1h-1zM245,214h1v1h-1zM245,222h1v1h-1zM245,231h1v1h-1zM245,239h1v1h-1zM245,247h1v1h-1zM245,255h1v1h-1zM245,264h1v1h-1zM245,272h1v1h-1zM245,280h1v1h-1zM245,288h1v1h-1zM245,297h1v1h-1zM245,305h1v1h-1zM245,313h1v1h-1zM245,321h1v1h-1zM253,41h1v1h-1zM253,82h1v1h-1zM253,124h1v1h-1zM253,165h1v1h-1zM253,206h1v1h-1zM253,247h1v1h-1zM253,288h1v1h-1zM261,41h1v1h-1zM261,82h1v1h-1zM261,124h1v1h-1zM261,165h1v1h-1zM261,206h1v1h-1zM261,247h1v1h-1zM261,288h1v1h-1zM269,41h1v1h-1zM269,82h1v1h-1zM269,124h1v1h-1zM269,165h1v1h-1zM269,206h1v1h-1zM269,247h1v1h-1zM269,288h1v1h-1zM277,41h1v1h-1zM277,82h1v1h-1zM277,124h1v1h-1zM277,165h1v1h-1zM277,206h1v1h-1zM277,247h1v1h-1zM277,288h1v1h-1zM286,0h1v1h-1zM286,8h1v1h-1zM286,16h1v1h-1zM286,25h1v1h-1zM286,33h1v1h-1zM286,41h1v1h-1zM286,49h1v1h-1zM286,58h1v1h-1zM286,66h1v1h-1zM286,74h1v1h-1zM286,82h1v1h-1zM286,91h1v1h-1zM286,99h1v1h-1zM286,107h1v1h-1zM286,115h1v1h-1zM286,124h1v1h-1zM286,132h1v1h-1zM286,140h1v1h-1zM286,148h1v1h-1zM286,157h1v1h-1zM286,165h1v1h-1zM286,173h1v1h-1zM286,181h1v1h-1zM286,190h1v1h-1zM286,198h1v1h-1zM286,206h1v1h-1zM286,214h1v1h-1zM286,222h1v1h-1zM286,231h1v1h-1zM286,239h1v1h-1zM286,247h1v1h-1zM286,255h1v1h-1zM286,264h1v1h-1zM286,272h1v1h-1zM286,280h1v1h-1zM286,288h1v1h-1zM286,297h1v1h-1zM286,305h1v1h-1zM286,313h1v1h-1zM286,321h1v1h-1zM294,41h1v1h-1zM294,82h1v1h-1zM294,124h1v1h-1zM294,165h1v1h-1zM294,206h1v1h-1zM294,247h1v1h-1zM294,288h1v1h-1zM302,41h1v1h-1zM302,82h1v1h-1zM302,124h1v1h-1zM302,165h1v1h-1zM302,206h1v1h-1zM302,247h1v1h-1zM302,288h1v1h-1zM310,41h1v1h-1zM310,82h1v1h-1zM310,124h1v1h-1zM310,165h1v1h-1zM310,206h1v1h-1zM310,247h1v1h-1zM310,288h1v1h-1zM318,41h1v1h-1zM318,82h1v1h-1zM318,124h1v1h-1zM318,165h1v1h-1zM318,206h1v1h-1zM318,247h1v1h-1zM318,288h1v1h-1zM326,0h1v1h-1zM326,8h1v1h-1zM326,16h1v1h-1zM326,25h1v1h-1zM326,33h1v1h-1zM326,41h1v1h-1zM326,49h1v1h-1zM326,58h1v1h-1zM326,66h1v1h-1zM326,74h1v1h-1zM326,82h1v1h-1zM326,91h1v1h-1zM326,99h1v1h-1zM326,107h1v1h-1zM326,115h1v1h-1zM326,124h1v1h-1zM326,132h1v1h-1zM326,140h1v1h-1zM326,148h1v1h-1zM326,157h1v1h-1zM326,165h1v1h-1zM326,173h1v1h-1zM326,181h1v1h-1zM326,190h1v1h-1zM326,198h1v1h-1zM326,206h1v1h-1zM326,214h1v1h-1zM326,222h1v1h-1zM326,231h1v1h-1zM326,239h1v1h-1zM326,247h1v1h-1zM326,255h1v1h-1zM326,264h1v1h-1zM326,272h1v1h-1zM326,280h1v1h-1zM326,288h1v1h-1zM326,297h1v1h-1zM326,305h1v1h-1zM326,313h1v1h-1zM326,321h1v1h-1zM335,41h1v1h-1zM335,82h1v1h-1zM335,124h1v1h-1zM335,165h1v1h-1zM335,206h1v1h-1zM335,247h1v1h-1zM335,288h1v1h-1zM343,41h1v1h-1zM343,82h1v1h-1zM343,124h1v1h-1zM343,165h1v1h-1zM343,206h1v1h-1zM343,247h1v1h-1zM343,288h1v1h-1zM351,41h1v1h-1zM351,82h1v1h-1zM351,124h1v1h-1zM351,165h1v1h-1zM351,206h1v1h-1zM351,247h1v1h-1zM351,288h1v1h-1zM359,41h1v1h-1zM359,82h1v1h-1zM359,124h1v1h-1zM359,165h1v1h-1zM359,206h1v1h-1zM359,247h1v1h-1zM359,288h1v1h-1zM367,0h1v1h-1zM367,8h1v1h-1zM367,16h1v1h-1zM367,25h1v1h-1zM367,33h1v1h-1zM367,41h1v1h-1zM367,49h1v1h-1zM367,58h1v1h-1zM367,66h1v1h-1zM367,74h1v1h-1zM367,82h1v1h-1zM367,91h1v1h-1zM367,99h1v1h-1zM367,107h1v1h-1zM367,115h1v1h-1zM367,124h1v1h-1zM367,132h1v1h-1zM367,140h1v1h-1zM367,148h1v1h-1zM367,157h1v1h-1zM367,165h1v1h-1zM367,173h1v1h-1zM367,181h1v1h-1zM367,190h1v1h-1zM367,198h1v1h-1zM367,206h1v1h-1zM367,214h1v1h-1zM367,222h1v1h-1zM367,231h1v1h-1zM367,239h1v1h-1zM367,247h1v1h-1zM367,255h1v1h-1zM367,264h1v1h-1zM367,272h1v1h-1zM367,280h1v1h-1zM367,288h1v1h-1zM367,297h1v1h-1zM367,305h1v1h-1zM367,313h1v1h-1zM367,321h1v1h-1zM375,41h1v1h-1zM375,82h1v1h-1zM375,124h1v1h-1zM375,165h1v1h-1zM375,206h1v1h-1zM375,247h1v1h-1zM375,288h1v1h-1zM384,41h1v1h-1zM384,82h1v1h-1zM384,124h1v1h-1zM384,165h1v1h-1zM384,206h1v1h-1zM384,247h1v1h-1zM384,288h1v1h-1zM392,41h1v1h-1zM392,82h1v1h-1zM392,124h1v1h-1zM392,165h1v1h-1zM392,206h1v1h-1zM392,247h1v1h-1zM392,288h1v1h-1zM400,41h1v1h-1zM400,82h1v1h-1zM400,124h1v1h-1zM400,165h1v1h-1zM400,206h1v1h-1zM400,247h1v1h-1zM400,288h1v1h-1zM408,41h1v1h-1zM408,82h1v1h-1zM408,124h1v1h-1zM408,165h1v1h-1zM408,206h1v1h-1zM408,247h1v1h-1zM408,288h1v1h-1z" fill="#c4c4c4"/><rect x="131" y="0" width="1" height="330" fill="#f0f0f0"/><rect x="217" y="0" width="1" height="330" fill="#f0f0f0"/></g>
<path d="M0.0,230.4L65.0,230.4L66.0,229.6L67.0,230.4L76.0,230.4L77.0,229.8L78.0,230.4L81.6,230.4L81.6,287.3L180.5,287.3L180.5,73.3L188.0,73.3L189.0,90.8L190.3,121.5L193.4,158.5L197.4,183.0L202.6,197.0L206.0,200.0L209.7,201.6L214.3,205.2L216.8,209.2L222.0,217.0L227.0,220.5L232.8,223.3L239.0,225.6L245.0,227.0L254.0,228.2L263.5,228.9L264.0,229.6L265.0,228.9L282.0,229.2L293.0,229.4L294.0,228.6L295.0,229.6L296.0,228.7L297.0,229.4L377.0,229.4L378.0,230.2L379.0,229.3L388.0,229.4L389.0,230.1L390.0,229.3L409.0,229.4" fill="none" stroke="#f00" stroke-width="1.1" stroke-linejoin="round"/>
<path d="M0.0,82.5L76.0,82.5L80.0,82.0L103.9,74.3L122.0,66.8L131.4,65.0L137.7,65.2L140.0,64.2L152.0,55.6L164.0,47.6L173.3,43.6L178.0,42.4L180.0,42.3L181.3,48.4L184.0,61.8L186.6,67.7L191.2,74.8L197.4,78.5L206.6,80.2L217.4,81.1L232.0,81.6L282.0,81.5L283.0,81.0L284.0,81.6L342.0,81.5L343.0,81.9L344.0,81.4L409.0,81.5" fill="none" stroke="#ff0" stroke-width="1.1" stroke-linejoin="round"/>
<g fill="none" stroke="#fff" stroke-width="1"><path d="M102,50.2L117.600,58.400"/><path d="M119.400,55.300L115.400,62.600H124.700z"/><path d="M256.600,191L229.100,204.800"/><path d="M226.500,201.400L221.500,208.600H230.700z"/></g><rect x="216.500" y="207" width="1.500" height="3" fill="#0dd"/><rect x="131" y="64.500" width="1.500" height="1.500" fill="#22f"/>
</svg>
<div style="left:354px;top:203px;width:85px;height:27px;background:#ffff80;border-radius:3px;border-top:1px solid #fff;border-left:1px solid #fff;border-right:2px solid #9c9c9c;border-bottom:2px solid #9c9c9c;"></div>
<div class="t" style="left:358px;top:208px;">Injecctor opens</div>
<div style="left:392px;top:223px;width:10px;height:7px;background:#f00"></div>
<div style="left:594px;top:272px;width:126px;height:29px;background:#ffff80;border-radius:3px;border-top:1px solid #fff;border-left:1px solid #fff;border-right:2px solid #9c9c9c;border-bottom:2px solid #9c9c9c;"></div>
<div class="t" style="left:598px;top:276px;">Injector current signal</div>
<div style="left:652px;top:295px;width:10px;height:7px;background:#f00"></div>
<div style="left:561px;top:345px;width:83px;height:26px;background:#ffff80;border-radius:3px;border-top:1px solid #fff;border-left:1px solid #fff;border-right:2px solid #9c9c9c;border-bottom:2px solid #9c9c9c;"></div>
<div class="t" style="left:565px;top:348px;">Injecctor closes</div>
<div style="left:598px;top:364px;width:10px;height:7px;background:#f00"></div>
<div style="left:583px;top:423px;width:136px;height:33px;background:#ffff80;border-radius:3px;border-top:1px solid #fff;border-left:1px solid #fff;border-right:2px solid #9c9c9c;border-bottom:2px solid #9c9c9c;"></div>
<div class="t" style="left:588px;top:427px;">Injector signal voltage</div>
<div style="left:646px;top:449px;width:10px;height:7px;background:#f00"></div>

<!-- scroll bar + time axis -->
<div style="left:318px;top:510px;width:393px;height:16px;background:#a0a0a0"></div>
<div style="left:711px;top:510px;width:16px;height:16px;background:#f0f0f0;border:1px solid #fff;border-right-color:#6a6a6a;border-bottom-color:#6a6a6a;"></div>
<svg style="left:715px;top:513px" width="8" height="9" viewBox="0 0 8 9"><path d="M1.500,0.500V8.500L7,4.500z" fill="#000"/></svg>
<div style="left:318px;top:526px;width:449px;height:1px;background:#fff"></div>
<div style="left:318px;top:527px;width:449px;height:18px;background:#000"></div>
<div style="left:221px;top:545px;width:546px;height:1px;background:#808080"></div>
<div style="left:221px;top:546px;width:546px;height:1px;background:#c0c0c0"></div>
<div style="left:221px;top:547px;width:546px;height:2px;background:#fff"></div>
<div class="t tx" style="left:380px;top:530px;">0.00 s</div>
<div class="t tx" style="left:461px;top:530px;">2.00 ms</div>
<div class="t tx" style="left:543px;top:530px;">4.00 ms</div>
<div class="t tx" style="left:625px;top:530px;">6.00 ms</div>
<div class="t tx" style="left:707px;top:530px;">8.00 ms</div>
<!-- status bar -->
<div style="left:15px;top:549px;width:754px;height:1px;background:#a0a0a0"></div>
<div style="left:15px;top:550px;width:754px;height:17px;background:#f1eeee"></div>
<div style="left:15px;top:567px;width:754px;height:1px;background:#fff"></div>

<!-- scope toolbar icons -->
<svg style="left:326px;top:157px" width="16" height="16" viewBox="0 0 16 16" shape-rendering="crispEdges"><rect width="16" height="16" fill="#000"/><path d="M3,13H7V8H13V3" fill="none" stroke="#0f0" stroke-width="2"/><rect x="2" y="12" width="2" height="2" fill="#fff"/><rect x="6" y="7" width="2" height="2" fill="#fff"/><rect x="12" y="2" width="2" height="2" fill="#fff"/></svg>
<div style="left:347px;top:154px;width:1px;height:22px;background:#9a9eae"></div><div style="left:348px;top:154px;width:1px;height:22px;background:#f6f7fb"></div>
<svg style="left:355px;top:157px" width="16" height="16" viewBox="0 0 16 16"><rect width="16" height="16" fill="#000"/><path d="M1,8.500C2,1.500 7,1.500 8.500,6.500S12,9 14.500,6.500" fill="none" stroke="#0f0" stroke-width="1.700"/><path d="M1,9.500C2.500,15 7.500,14.500 9,10.500S12.500,8.500 14.500,11.500" fill="none" stroke="#0ff" stroke-width="1.700"/></svg>
<div style="left:374px;top:155px;width:23px;height:20px;border:1px solid #555a66;border-radius:4px;background:linear-gradient(#cfd3e2,#c3c8da);box-shadow:inset 0 0 0 1px #eceef6;"></div>
<svg style="left:378px;top:157px" width="16" height="16" viewBox="0 0 16 16"><rect width="16" height="16" fill="#000"/><path d="M0,9L8,2.500L16,7" fill="none" stroke="#0f0" stroke-width="1.600"/><path d="M4.500,1V15M11.500,1V15" stroke="#fff" stroke-width="1.200"/></svg>
<svg style="left:401px;top:157px" width="16" height="16" viewBox="0 0 16 16"><rect width="16" height="16" fill="#000"/><path d="M0,10L8,2.500L16,6" fill="none" stroke="#0f0" stroke-width="1.600"/><path d="M8,3V15" stroke="#fff" stroke-width="1.400"/><rect x="2.500" y="9.500" width="2.500" height="4" fill="none" stroke="#ddd" stroke-width="0.800"/></svg>
<svg style="left:424px;top:157px" width="16" height="16" viewBox="0 0 16 16"><rect width="16" height="16" fill="#000"/><rect x="2" y="3" width="3" height="3" fill="#0f0"/><rect x="2" y="9" width="3" height="3" fill="#0ff"/><path d="M7,4.500H14M7,10.500H14" stroke="#bbb" stroke-width="2.400" stroke-dasharray="2 0.800"/></svg>
<svg style="left:446px;top:156px" width="17" height="17" viewBox="0 0 17 17"><path d="M1,3.500L4,1L12,9.500L8.500,12.500z" fill="#e86a1a" stroke="#8a3a0a" stroke-width="0.800"/><path d="M8.500,12.500L12,9.500L13.500,11L10,14z" fill="#222"/><path d="M10,14L13.500,11L16,13.500L13,16.500z" fill="#f4f4f4" stroke="#bbb" stroke-width="0.600"/></svg>
<svg style="left:470px;top:157px" width="16" height="16" viewBox="0 0 16 16"><rect x="0.500" y="0.500" width="15" height="15" fill="#d8dbe6" stroke="#b4b8c6"/><rect x="2" y="8" width="6" height="6" fill="#c4c8d6" stroke="#a4a8b8" stroke-width="0.800"/><path d="M7,9L13,3M13,3H9.500M13,3V6.500" stroke="#b0b4c4" stroke-width="1.300" fill="none"/></svg>
<div style="left:491px;top:154px;width:1px;height:22px;background:#9a9eae"></div><div style="left:492px;top:154px;width:1px;height:22px;background:#f6f7fb"></div>
<svg style="left:498px;top:156px" width="18" height="18" viewBox="0 0 18 18"><rect x="0.500" y="0.500" width="14" height="9.500" rx="1.500" fill="#f2ee4a" stroke="#8a8620" stroke-width="0.900"/><path d="M2.500,3.500H9M2.500,6H7" stroke="#8a8a30" stroke-width="1" stroke-dasharray="1.200 0.500"/><path d="M8,10.500L14,15.500" stroke="#000" stroke-width="1.600"/><path d="M16.500,17.500L11,16.500L15.500,12z" fill="#000"/></svg>
<svg style="left:521px;top:156px" width="18" height="18" viewBox="0 0 18 18"><rect x="1.500" y="3.500" width="14" height="11" rx="1" fill="#f4d870" stroke="#c89a30"/><path d="M2,4L8.500,9.500L15,4" fill="none" stroke="#c89a30"/><path d="M1.500,1.500L15.500,16.500M15.500,1.500L1.500,16.500" stroke="#f01818" stroke-width="2.200"/></svg>
<div style="left:543px;top:154px;width:1px;height:22px;background:#9a9eae"></div><div style="left:544px;top:154px;width:1px;height:22px;background:#f6f7fb"></div>
<svg style="left:551px;top:156px" width="18" height="18" viewBox="0 0 18 18"><path d="M1,9.500C4.500,4.500 12.500,4.500 16,9.500C12.500,13.500 4.500,13.500 1,9.500z" fill="#d4d7e2" stroke="#a0a4b4" stroke-width="1.100"/><circle cx="8.500" cy="9" r="2.300" fill="#a8acbc"/><path d="M3,15.500L14.500,2.500M6,2.500L13,15.500" stroke="#a8acbc" stroke-width="1.300"/></svg>
<div class="t" style="left:690px;top:154px;font-family:'Liberation Serif',serif;font-size:19px;line-height:22px;">1</div>
<svg style="left:704px;top:158px" width="16" height="15" viewBox="0 0 16 15"><path d="M2.500,2L13.500,13M13.500,2L2.500,13" stroke="#a4a8b6" stroke-width="3.200" stroke-linecap="round"/></svg>

<svg style="left:756px;top:556px" width="12" height="12" viewBox="0 0 12 12" shape-rendering="crispEdges"><g fill="#fff"><rect x="10" y="2" width="2" height="2"/><rect x="6" y="6" width="2" height="2"/><rect x="10" y="6" width="2" height="2"/><rect x="2" y="10" width="2" height="2"/><rect x="6" y="10" width="2" height="2"/><rect x="10" y="10" width="2" height="2"/></g><g fill="#b9b5b5"><rect x="9" y="1" width="2" height="2"/><rect x="5" y="5" width="2" height="2"/><rect x="9" y="5" width="2" height="2"/><rect x="1" y="9" width="2" height="2"/><rect x="5" y="9" width="2" height="2"/><rect x="9" y="9" width="2" height="2"/></g></svg>
<!-- value window -->
<div style="left:17px;top:395px;width:362px;height:171px;border:1px solid #3c3f44;border-radius:2px;box-shadow:0 3px 11px 3px rgba(0,0,0,.5),0 4px 10px rgba(0,0,0,.3);
 background:linear-gradient(90deg,#d6e4f4 0,#d3e1f2 180px,#bccadb 190px,#7a838e 199px,#2e2f31 209px,#3a3a3a 220px,#565656 238px,#4a4a4a 250px,#2c2c2c 264px,#383838 282px,#6c6c6c 299px,#525252 312px,#3e3e3e 330px,#464646 362px);"></div>
<div style="left:18px;top:396px;width:360px;height:23px;background:linear-gradient(100deg,#dbe8f6 0,#d6e3f3 184px,#b4c2d2 194px,#6c747e 203px,#2c2d2f 212px,#444 224px,#5e5e5e 238px,#565656 248px,#343434 260px,#2e2e2e 268px,#4c4c4c 286px,#707070 300px,#5a5a5a 310px,#424242 324px,#484848 362px);"></div>
<div style="left:18px;top:396px;width:360px;height:23px;background:linear-gradient(rgba(255,255,255,.22),rgba(255,255,255,0) 60%);"></div>
<div style="left:18px;top:396px;width:360px;height:1px;background:rgba(255,255,255,.55)"></div>
<!-- lower frame parts light blue -->
<div style="left:18px;top:419px;width:190px;height:146px;background:#c3d9ee"></div>
<div style="left:18px;top:548px;width:360px;height:17px;background:#bed5ec"></div>
<div style="left:204px;top:548px;width:174px;height:17px;background:linear-gradient(#e9ecf0,#bfd4ea 4px)"></div>
<div style="left:18px;top:397px;width:1px;height:168px;background:rgba(255,255,255,.7)"></div>
<div style="left:374px;top:419px;width:4px;height:129px;background:linear-gradient(90deg,#9aa0a8,#50555c 2px,#3a3d42)"></div>
<div class="t m" style="left:25px;top:401px;letter-spacing:0.13px;text-shadow:0 0 6px #fff,0 0 4px #fff;">Value window of graph 1</div>
<!-- close button -->
<div style="left:358px;top:400px;width:16px;height:16px;border:1px solid #5a2a22;border-radius:3px;background:linear-gradient(#e29a86 0,#d0644c 45%,#b83a22 50%,#cc5a3a 100%);box-shadow:inset 0 0 0 1px rgba(255,255,255,.35);"></div>
<svg style="left:362px;top:404px" width="8" height="8" viewBox="0 0 8 8"><path d="M1.200,1.200L6.800,6.800M6.800,1.200L1.200,6.800" stroke="#3a2a2a" stroke-width="3"/><path d="M1.200,1.200L6.800,6.800M6.800,1.200L1.200,6.800" stroke="#fff" stroke-width="1.700"/></svg>
<!-- client -->
<div style="left:23px;top:419px;width:351px;height:141px;border:1px solid #1a1a1a;background:#fff;"></div>
<div style="left:24px;top:420px;width:349px;height:27px;background:linear-gradient(#f9fafd 0,#e6e9f5 9px,#d6dbee 10px,#d9ddef 100%);"></div>
<!-- icons -->
<svg style="left:31px;top:426px" width="17" height="17" viewBox="0 0 17 17"><text x="0" y="9" font-family="Liberation Sans,sans-serif" font-size="10.500" fill="#000" textLength="15" lengthAdjust="spacingAndGlyphs">0.1</text><path d="M4.500,10L8,15L13.500,7" fill="none" stroke="#e01818" stroke-width="1.700"/></svg>
<svg style="left:55px;top:426px" width="15" height="16" viewBox="0 0 15 16"><path d="M1.500,2.500H12.500V15H1.500z" fill="#e8a020" stroke="#8a5a10"/><path d="M3.500,4.500H10.500V13H3.500z" fill="#fdfdf4" stroke="#c8b890" stroke-width="0.600"/><path d="M5,1H9V3.500H5z" fill="#6a6a6a"/><path d="M5,7H9.500M5,9H9.500M5,11H8" stroke="#9aa" stroke-width="0.800"/></svg>
<!-- table 1 -->
<div style="left:25px;top:447px;width:347px;height:62px;border:1px solid #828790;background:#fff;"></div>
<div style="left:26px;top:448px;width:345px;height:23px;background:linear-gradient(#fff 0,#fff 9px,#f6f7f9 10px,#f1f2f5 100%);border-bottom:1px solid #d5d8de;"></div>
<div style="left:116px;top:448px;width:1px;height:23px;background:#dee1e6"></div>
<div style="left:242px;top:448px;width:1px;height:23px;background:#dee1e6"></div>
<div style="left:366px;top:448px;width:1px;height:23px;background:#dee1e6"></div>
<div style="left:116px;top:472px;width:1px;height:36px;background:#f0f0f0"></div>
<div style="left:242px;top:472px;width:1px;height:36px;background:#f0f0f0"></div>
<div style="left:26px;top:489px;width:345px;height:1px;background:#f0f0f0"></div>
<div class="t" style="left:32px;top:454px;letter-spacing:-0.25px">Measurement</div>
<div class="t" style="left:126px;top:454px;letter-spacing:-0.23px">ATS5004D(26697).Ch1</div>
<div class="t" style="left:251px;top:454px;letter-spacing:-0.23px">ATS5004D(26697).Ch2</div>
<svg style="left:32px;top:474px" width="16" height="14" viewBox="0 0 16 14"><path d="M1.500,0.500V13.500" stroke="#222" stroke-width="1.200"/><path d="M4,7H13M7.500,3.500L4,7L7.500,10.500" fill="none" stroke="#1a5af0" stroke-width="1.500"/></svg>
<div class="t" style="left:48px;top:474px;">Left</div>
<svg style="left:31px;top:492px" width="18" height="14" viewBox="0 0 18 14"><path d="M15.500,0.500V13.500" stroke="#222" stroke-width="1.200"/><path d="M1.500,7H11M7.500,3.500L11,7L7.500,10.500" fill="none" stroke="#1a5af0" stroke-width="1.500"/></svg>
<div class="t" style="left:49px;top:492px;">Right</div>
<div class="t" style="left:137px;top:474px;width:100px;text-align:right;">0.16 V</div>
<div class="t" style="left:137px;top:492px;width:100px;text-align:right;">19.41 V</div>
<div class="t" style="left:261px;top:474px;width:100px;text-align:right;">423 mA</div>
<div class="t" style="left:261px;top:492px;width:100px;text-align:right;">41 mA</div>
<!-- table 2 -->
<div style="left:25px;top:514px;width:347px;height:44px;border:1px solid #828790;background:#fff;"></div>
<div style="left:26px;top:515px;width:345px;height:23px;background:linear-gradient(#fff 0,#fff 9px,#f6f7f9 10px,#f1f2f5 100%);border-bottom:1px solid #d5d8de;"></div>
<div style="left:96px;top:515px;width:1px;height:23px;background:#dee1e6"></div>
<div style="left:152px;top:515px;width:1px;height:23px;background:#dee1e6"></div>
<div style="left:208px;top:515px;width:1px;height:23px;background:#dee1e6"></div>
<div style="left:281px;top:515px;width:1px;height:23px;background:#dee1e6"></div>
<div style="left:356px;top:515px;width:1px;height:23px;background:#dee1e6"></div>
<div class="t" style="left:33px;top:521px;letter-spacing:-0.15px">Domain</div>
<div class="t" style="left:103px;top:521px;">Left</div>
<div class="t" style="left:159px;top:521px;">Right</div>
<div class="t" style="left:216px;top:521px;letter-spacing:-0.15px">Difference</div>
<div class="t" style="left:288px;top:521px;">1/Difference</div>
<div class="t" style="left:33px;top:542px;">Time</div>
<div class="t" style="left:103px;top:542px;letter-spacing:-0.15px">1.203 ms</div>
<div class="t" style="left:159px;top:542px;letter-spacing:-0.15px">3.290 ms</div>
<div class="t" style="left:216px;top:542px;letter-spacing:-0.15px">2.087 ms</div>
<div class="t" style="left:288px;top:542px;letter-spacing:-0.15px">479.246 Hz</div>
</div>
</body>
</html>
